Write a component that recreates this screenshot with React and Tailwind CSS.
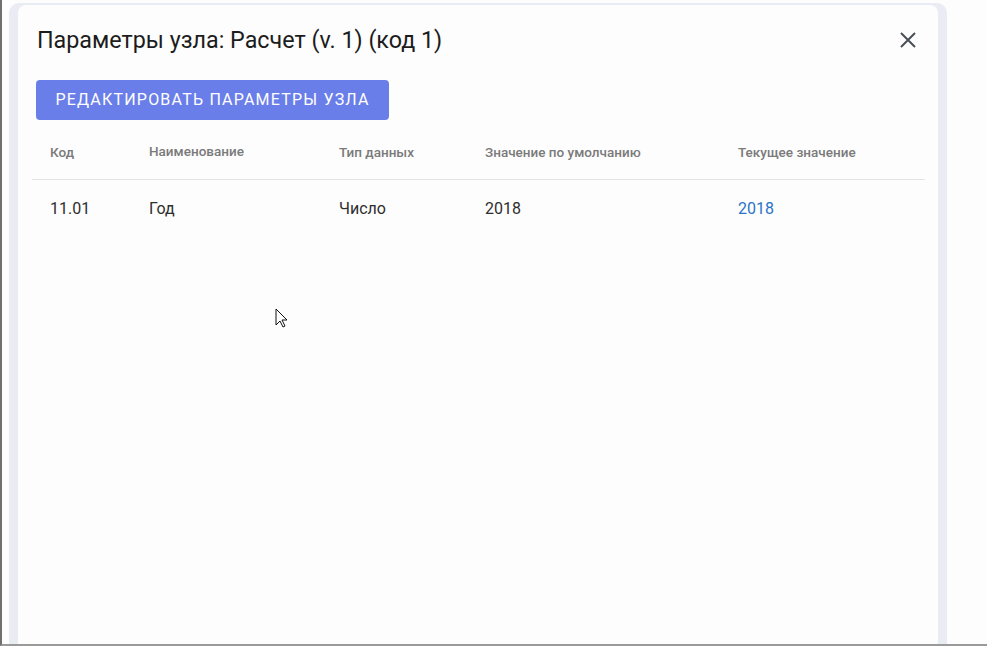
import React from "react";

export default function App() {
  return (
    <div className="relative w-[987px] h-[646px] overflow-hidden bg-[#fdfdfd] border-l-[2px] border-b-[2px] border-l-[#707070] border-b-[#9a9a9a] font-['Roboto',sans-serif]">
      <div className="flex h-full pl-[7px] pt-[3px]">
        <div className="flex w-[938px] h-full rounded-t-[10px] bg-[#e9ecf2] px-[9px] pt-[2px]">
          <div className="flex flex-col w-[920px] h-full rounded-t-[8px] bg-[#fdfdfd]">
            <div className="flex items-center justify-between pl-[19px] pr-[21px] h-[70px]">
              <h2 className="text-[23.3px] leading-[30px] font-normal text-[#1c1c1c]">
                Параметры узла: Расчет (v. 1) (код 1)
              </h2>
              <svg width="18" height="18" viewBox="0 0 18 18">
                <path d="M2 2 L16 16 M16 2 L2 16" stroke="#4a4f57" strokeWidth="2" strokeLinecap="butt" />
              </svg>
            </div>
            <div className="pl-[18px] pt-[5px]">
              <button className="h-[40px] w-[353px] rounded-[4px] bg-[#6a7ee9] text-white text-[16px] font-normal tracking-[1.2px] uppercase">
                Редактировать параметры узла
              </button>
            </div>
            <div className="ml-[14px] w-[893px]">
              <div className="grid grid-cols-[99px_190px_146px_253px_1fr] h-[60px] items-center border-b border-[#e3e3e3] text-[13.5px] font-medium text-[#7a7a7a]">
                <div className="pl-[18px] pt-[6px]">Код</div>
                <div className="pl-[18px] pt-[4px]">Наименование</div>
                <div className="pl-[18px] pt-[6px]">Тип данных</div>
                <div className="pl-[18px] pt-[6px]">Значение по умолчанию</div>
                <div className="pl-[18px] pt-[6px]">Текущее значение</div>
              </div>
              <div className="grid grid-cols-[99px_190px_146px_253px_1fr] h-[54px] pt-[4px] items-center text-[16px] text-[#2e2e2e]">
                <div className="pl-[18px]">11.01</div>
                <div className="pl-[18px]">Год</div>
                <div className="pl-[18px]">Число</div>
                <div className="pl-[18px]">2018</div>
                <div className="pl-[18px] text-[#2a74c8]">2018</div>
              </div>
            </div>
          </div>
        </div>
      </div>
      <svg className="absolute left-[273px] top-[308px]" width="12" height="20" viewBox="0 0 12 20">
        <path d="M1 1 L1 17 L5 13 L8 19 L10 18 L7 12 L12 12 Z" fill="#ffffff" stroke="#111111" strokeWidth="1" />
      </svg>
    </div>
  );
}
